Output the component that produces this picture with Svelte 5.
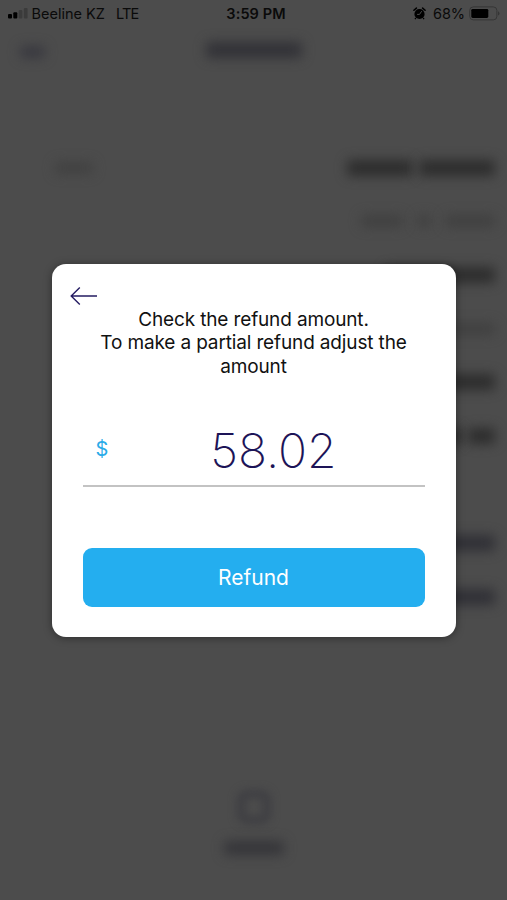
<script lang="ts">
    type Row = { label?: number; parts: number[]; tone: string };

    let amount = $state('58.02');

    // widths of the blurred placeholders behind the dialog
    const rows: Row[] = [
        { label: 38, parts: [66, 76], tone: 'dark' },
        { parts: [42, 14, 50], tone: 'faint' },
        { parts: [110], tone: 'dark' },
        { parts: [90], tone: 'faint' },
        { parts: [80], tone: 'dark' },
        { parts: [44, 27], tone: 'dark' },
        { parts: [], tone: 'faint' },
        { parts: [70], tone: 'navy' },
        { parts: [70], tone: 'navy' }
    ];
</script>

<div class="screen">
    <header class="status-bar">
        <div class="carrier">
            <svg class="signal" width="20" height="11" viewBox="0 0 20 11">
                <rect x="0" y="6" width="4" height="4.5" rx="1" />
                <rect x="5.3" y="4.2" width="4" height="6.3" rx="1" />
                <rect x="10.6" y="2.1" width="3.8" height="8.4" rx="1" opacity="0.22" />
                <rect x="15.8" y="0" width="3.8" height="10.5" rx="1" opacity="0.22" />
            </svg>
            <span class="carrier-name">Beeline KZ</span>
            <span class="network">LTE</span>
        </div>
        <span class="time">3:59 PM</span>
        <div class="power">
            <svg class="alarm" width="13" height="13" viewBox="0 0 13 13">
                <circle cx="6.5" cy="7" r="5.1" />
                <path d="M0.9 3.3 3.4 1.1M9.6 1.1l2.5 2.2" stroke="#000" stroke-width="1.5" stroke-linecap="round" />
                <path d="M2.9 11 1.9 12.2M10.1 11l1 1.2" stroke="#000" stroke-width="1.2" />
                <path d="M8.7 4.2 6.5 7.4H4.1" stroke="#4c4c4c" stroke-width="1" fill="none" />
            </svg>
            <span class="percent">68%</span>
            <svg class="battery" width="31" height="15" viewBox="0 0 31 15">
                <rect x="0.7" y="0.9" width="27.2" height="13" rx="3.6" fill="none" stroke="#363636" />
                <rect x="2.3" y="2.9" width="17" height="9" rx="1.4" />
                <path d="M29.2 5.2c1.7.8 1.7 3.6 0 4.4z" fill="#303030" />
            </svg>
        </div>
    </header>

    <div class="backdrop-content" aria-hidden="true">
        <div class="nav">
            <span class="smudge nav-back"></span>
            <span class="smudge nav-title"></span>
        </div>
        <div class="rows">
            {#each rows as row}
                <div class="row {row.tone}">
                    <span class="smudge label" style="width: {row.label ?? 0}px"></span>
                    <div class="value">
                        {#each row.parts as width}
                            <span class="smudge" style="width: {width}px"></span>
                        {/each}
                    </div>
                </div>
            {/each}
        </div>
        <div class="action">
            <span class="action-icon"></span>
            <span class="smudge action-label"></span>
        </div>
    </div>

    <div class="overlay">
        <div class="dialog" role="dialog" aria-modal="true">
            <button class="back" aria-label="Back">
                <svg width="28" height="20" viewBox="0 0 28 20">
                    <path d="M27 10H1.2M9.8 1.5 1.2 10l8.6 8.5" />
                </svg>
            </button>
            <p class="message">
                Check the refund amount.<br />To make a partial refund adjust the<br />amount
            </p>
            <label class="amount">
                <span class="currency">$</span>
                <input type="text" inputmode="decimal" aria-label="Amount" bind:value={amount} />
            </label>
            <button class="submit">Refund</button>
        </div>
    </div>
</div>

<style>
    :global(body) {
        background: #4c4c4c;
    }
    .screen {
        position: relative;
        width: 507px;
        height: 900px;
        overflow: hidden;
        background: #4c4c4c;
        color: #000;
        font-family: Inter, 'Liberation Sans', sans-serif;
    }
    .status-bar {
        display: grid;
        grid-template-columns: 1fr auto 1fr;
        align-items: center;
        height: 27px;
        padding: 0 7px 0 8px;
        font-size: 14.5px;
        color: #0a0a0a;
    }
    .carrier,
    .power {
        display: flex;
        align-items: center;
    }
    .power {
        justify-content: flex-end;
    }
    .carrier-name {
        margin-left: 3.5px;
    }
    .network {
        margin-left: 11px;
        letter-spacing: -0.8px;
    }
    .time {
        padding-left: 4px;
        font-weight: 600;
        letter-spacing: 0.1px;
    }
    .percent {
        margin: 0 4px 0 7px;
        letter-spacing: -0.1px;
    }
    .smudge {
        display: block;
        height: 12px;
        border-radius: 4px;
        filter: blur(6px);
    }
    .nav {
        display: grid;
        grid-template-columns: 1fr auto 1fr;
        align-items: center;
        height: 46px;
        padding: 0 20px;
    }
    .nav-back {
        width: 25px;
        margin-top: 4px;
        background: #38383f;
    }
    .nav-title {
        width: 96px;
        height: 16px;
        background: #323237;
    }
    .rows {
        padding: 68px 12px 0 55px;
    }
    .row {
        display: flex;
        align-items: center;
        justify-content: space-between;
        height: 53.6px;
    }
    .value {
        display: flex;
        gap: 6px;
    }
    .label {
        background: #414141;
    }
    .dark .value .smudge {
        height: 16px;
        background: #2d2d2d;
    }
    .faint .value {
        gap: 14px;
    }
    .faint .value .smudge {
        background: #404040;
    }
    .navy .value .smudge {
        height: 16px;
        background: #303036;
    }
    .action {
        display: flex;
        flex-direction: column;
        align-items: center;
        gap: 17px;
        padding-top: 167px;
    }
    .action-icon {
        width: 18px;
        height: 18px;
        border: 8px solid #3e3e42;
        border-radius: 10px;
        filter: blur(4px);
    }
    .action-label {
        width: 60px;
        height: 14px;
        background: #353539;
    }
    .overlay {
        position: absolute;
        inset: 0;
        display: grid;
        place-items: center;
    }
    .dialog {
        box-sizing: border-box;
        display: flex;
        flex-direction: column;
        width: 404px;
        height: 373px;
        margin-top: 1px;
        padding: 22px 31px 30px;
        background: #fff;
        border-radius: 14px;
        box-shadow: 0 1px 8px rgba(0, 0, 0, 0.4);
    }
    .back {
        display: block;
        width: 28px;
        height: 20px;
        margin-left: -13px;
        padding: 0;
        background: none;
        border: none;
        cursor: pointer;
    }
    .back svg {
        display: block;
        fill: none;
        stroke: #251c62;
        stroke-width: 1.4;
    }
    .message {
        margin: 2px 0 0;
        font-size: 19px;
        line-height: 23.3px;
        letter-spacing: -0.14px;
        text-align: center;
        white-space: nowrap;
        color: #111;
    }
    .amount {
        display: flex;
        align-items: center;
        height: 71px;
        margin-top: 36px;
        border-bottom: 2px solid #c3c3c3;
    }
    .currency {
        width: 40px;
        padding-left: 13px;
        box-sizing: border-box;
        font-size: 20px;
        color: #2aabe8;
    }
    .amount input {
        flex: 1;
        min-width: 0;
        padding: 2px 0 0;
        border: none;
        outline: none;
        background: none;
        font-family: inherit;
        font-size: 48px;
        font-weight: 200;
        text-align: center;
        color: #1d1457;
    }
    .submit {
        height: 59px;
        margin-top: auto;
        padding: 0;
        border: none;
        border-radius: 9px;
        background: #24aeef;
        color: #fff;
        font-family: inherit;
        font-size: 21px;
        cursor: pointer;
    }
</style>
